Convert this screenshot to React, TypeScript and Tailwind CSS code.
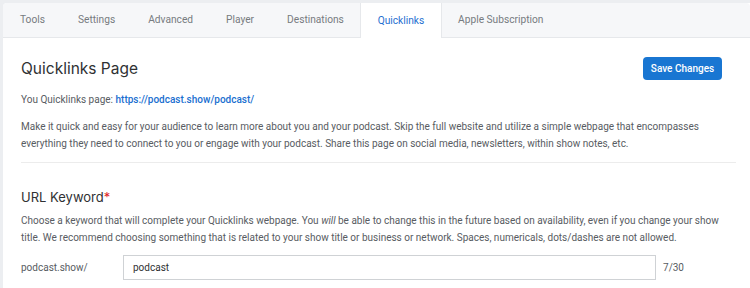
import React from "react";

const tabs = [
  "Tools",
  "Settings",
  "Advanced",
  "Player",
  "Destinations",
  "Quicklinks",
  "Apple Subscription",
];

export default function App() {
  const active = "Quicklinks";
  const keyword = "podcast";

  return (
    <div className="h-[288px] w-[750px] overflow-hidden bg-[#eceef1] pl-[3px] pt-[3px] font-['Roboto',sans-serif]">
      <div className="h-full rounded-tl-[4px] bg-white">
        {/* tab bar */}
        <div className="flex h-[35px] rounded-t-[4px] border-b border-[#e6e8eb] bg-[#f6f7f9] pl-[0.5px]">
          {tabs.map((tab) => (
            <div
              key={tab}
              className={
                tab === active
                  ? "-mb-px flex items-center border-x border-[#e6e8eb] bg-white px-[16.3px] text-[10.2px] text-[#1f6fd0]"
                  : "flex items-center px-[16.5px] text-[10.2px] text-[#777b80]"
              }
            >
              {tab}
            </div>
          ))}
        </div>

        <div className="w-[733px] pl-[18px]">
          {/* header */}
          <div className="mt-[19px] flex items-center justify-between pr-[14px]">
            <h1 className="font-['Inter',sans-serif] text-[15.5px] leading-[23px] text-[#2f3133]">
              Quicklinks Page
            </h1>
            <button className="h-[23px] w-[79px] rounded-[4px] bg-[#1976d2] text-[10px] font-medium text-white">
              Save Changes
            </button>
          </div>

          <p className="mt-[11px] text-[10px] leading-[17px] text-[#585c62]">
            You Quicklinks page:{" "}
            <a className="font-medium text-[#1a6fd0]">
              https://podcast.show/podcast/
            </a>
          </p>

          <p className="mt-[10px] text-[10px] leading-[17px] text-[#585c62]">
            Make it quick and easy for your audience to learn more about you and
            your podcast. Skip the full website and utilize a simple webpage
            that encompasses everything they need to connect to you or engage
            with your podcast. Share this page on social media, newsletters,
            within show notes, etc.
          </p>

          <div className="mt-[10px] h-px bg-[#ececec]" />

          {/* keyword */}
          <h2 className="mt-[24px] font-['Inter',sans-serif] text-[13px] leading-[20px] text-[#2f3133]">
            URL Keyword<span className="text-[#e02424]">*</span>
          </h2>

          <p className="mt-[5px] text-[10px] leading-[17px] text-[#585c62]">
            Choose a keyword that will complete your Quicklinks webpage. You{" "}
            <i>will</i> be able to change this in the future based on
            availability, even if you change your show title. We recommend
            choosing something that is related to your show title or business or
            network. Spaces, numericals, dots/dashes are not allowed.
          </p>

          <div className="mt-[9px] flex items-center">
            <span className="w-[102px] text-[10px] text-[#585c62]">
              podcast.show/
            </span>
            <div className="flex h-[25px] w-[533px] items-center border border-[#cfd2d5] px-[9px] text-[10px] text-[#2f3133]">
              {keyword}
            </div>
            <span className="ml-[7px] text-[10px] text-[#585c62]">
              {keyword.length}/30
            </span>
          </div>
        </div>
      </div>
    </div>
  );
}
